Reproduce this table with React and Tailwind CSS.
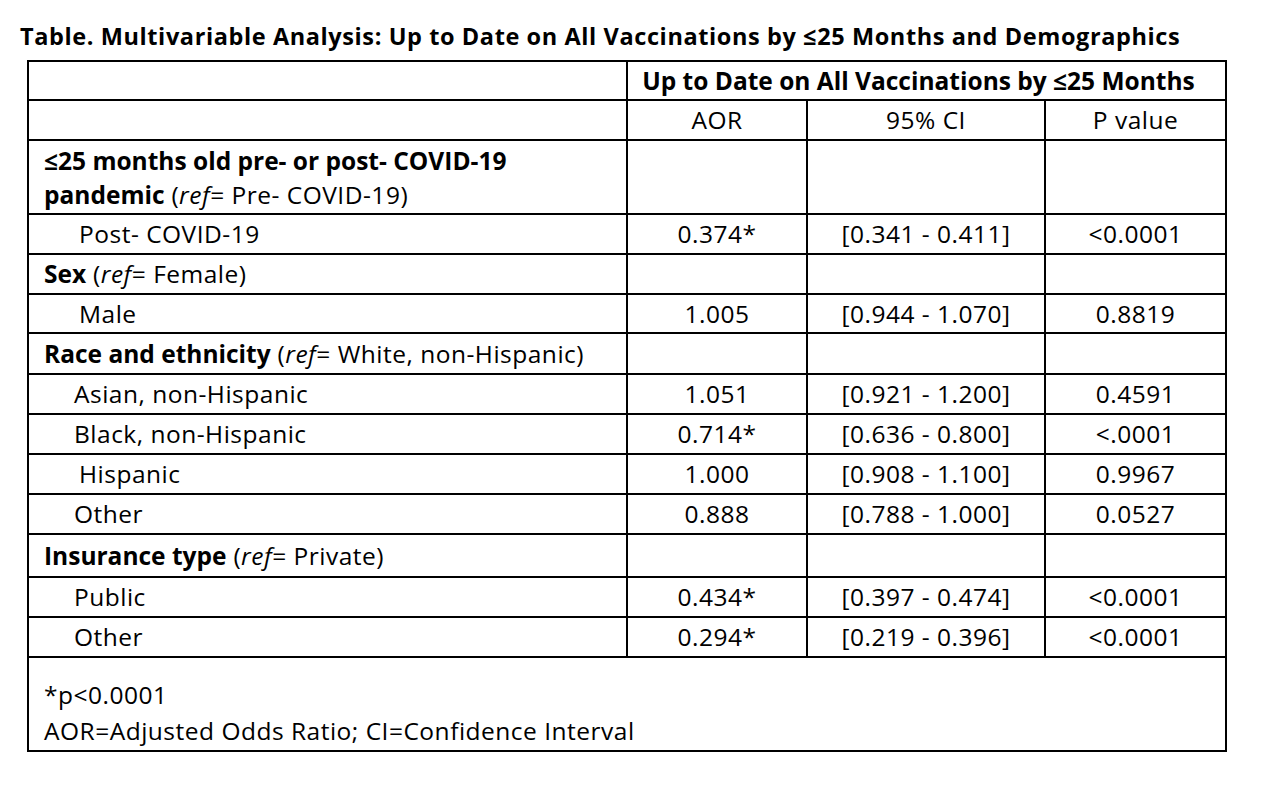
const ROWS = [
  { kind: "group2" },
  { label: "Post- COVID-19", indent: "pl-[50px]", aor: "0.374*", ci: "[0.341 - 0.411]", p: "<0.0001", h: "h-[40px]" },
  { kind: "group", bold: "Sex", ref: "Female", h: "h-[40px]" },
  { label: "Male", indent: "pl-[50px]", aor: "1.005", ci: "[0.944 - 1.070]", p: "0.8819", h: "h-[39px]" },
  { kind: "group", bold: "Race and ethnicity", ref: "White, non-Hispanic", h: "h-[41px]" },
  { label: "Asian, non-Hispanic", indent: "pl-[45px]", aor: "1.051", ci: "[0.921 - 1.200]", p: "0.4591", h: "h-[40px]" },
  { label: "Black, non-Hispanic", indent: "pl-[45px]", aor: "0.714*", ci: "[0.636 - 0.800]", p: "<.0001", h: "h-[40px]" },
  { label: "Hispanic", indent: "pl-[50px]", aor: "1.000", ci: "[0.908 - 1.100]", p: "0.9967", h: "h-[40px]" },
  { label: "Other", indent: "pl-[45px]", aor: "0.888", ci: "[0.788 - 1.000]", p: "0.0527", h: "h-[40px]" },
  { kind: "group", bold: "Insurance type", ref: "Private", h: "h-[43px]" },
  { label: "Public", indent: "pl-[45px]", aor: "0.434*", ci: "[0.397 - 0.474]", p: "<0.0001", h: "h-[40px]" },
  { label: "Other", indent: "pl-[45px]", aor: "0.294*", ci: "[0.219 - 0.396]", p: "<0.0001", h: "h-[40px]" },
];

const cell = "border-2 border-black align-middle p-0";

export default function App() {
  return (
    <div className="w-[1266px] h-[792px] bg-white text-black font-['Open_Sans','Noto_Sans',sans-serif]">
      <div className="pt-[21px] pl-[20px] text-[23.5px] leading-[30px] font-bold tracking-[0.6px] whitespace-nowrap">
        Table. Multivariable Analysis: Up to Date on All Vaccinations by ≤25 Months and Demographics
      </div>
      <div className="pl-[27px] pt-[9px]">
        <table className="border-collapse table-fixed w-[1198px] text-[24.5px] leading-[36px] tracking-[0.5px]">
          <colgroup>
            <col className="w-[599px]" />
            <col className="w-[180px]" />
            <col className="w-[238px]" />
            <col className="w-[181px]" />
          </colgroup>
          <tbody>
            <tr className="h-[39px]">
              <td className={cell}></td>
              <td colSpan={3} className={`${cell} text-center font-bold tracking-[0px] pr-[16px]`}>
                Up to Date on All Vaccinations by ≤25 Months
              </td>
            </tr>
            <tr className="h-[40px]">
              <td className={cell}></td>
              <td className={`${cell} text-center`}>AOR</td>
              <td className={`${cell} text-center`}>95% CI</td>
              <td className={`${cell} text-center`}>P value</td>
            </tr>
            {ROWS.map((r, i) => {
              if (r.kind === "group2") {
                return (
                  <tr key={i} className="h-[74px]">
                    <td className={`${cell} align-top pl-[15px] pt-[3px] leading-[34px]`}>
                      <div className="font-bold tracking-[0px]">≤25 months old pre- or post- COVID-19</div>
                      <div>
                        <span className="font-bold tracking-[0px]">pandemic</span> (<i>ref</i>= Pre- COVID-19)
                      </div>
                    </td>
                    <td className={cell}></td>
                    <td className={cell}></td>
                    <td className={cell}></td>
                  </tr>
                );
              }
              if (r.kind === "group") {
                return (
                  <tr key={i} className={r.h}>
                    <td className={`${cell} pl-[15px]`}>
                      <span className="font-bold tracking-[0px]">{r.bold}</span> (<i>ref</i>= {r.ref})
                    </td>
                    <td className={cell}></td>
                    <td className={cell}></td>
                    <td className={cell}></td>
                  </tr>
                );
              }
              return (
                <tr key={i} className={r.h}>
                  <td className={`${cell} ${r.indent}`}>{r.label}</td>
                  <td className={`${cell} text-center`}>{r.aor}</td>
                  <td className={`${cell} text-center`}>{r.ci}</td>
                  <td className={`${cell} text-center`}>{r.p}</td>
                </tr>
              );
            })}
            <tr className="h-[94px]">
              <td colSpan={4} className={`${cell} align-top pl-[15px] pt-[19px] leading-[36px]`}>
                <div>*p&lt;0.0001</div>
                <div>AOR=Adjusted Odds Ratio; CI=Confidence Interval</div>
              </td>
            </tr>
          </tbody>
        </table>
      </div>
    </div>
  );
}
